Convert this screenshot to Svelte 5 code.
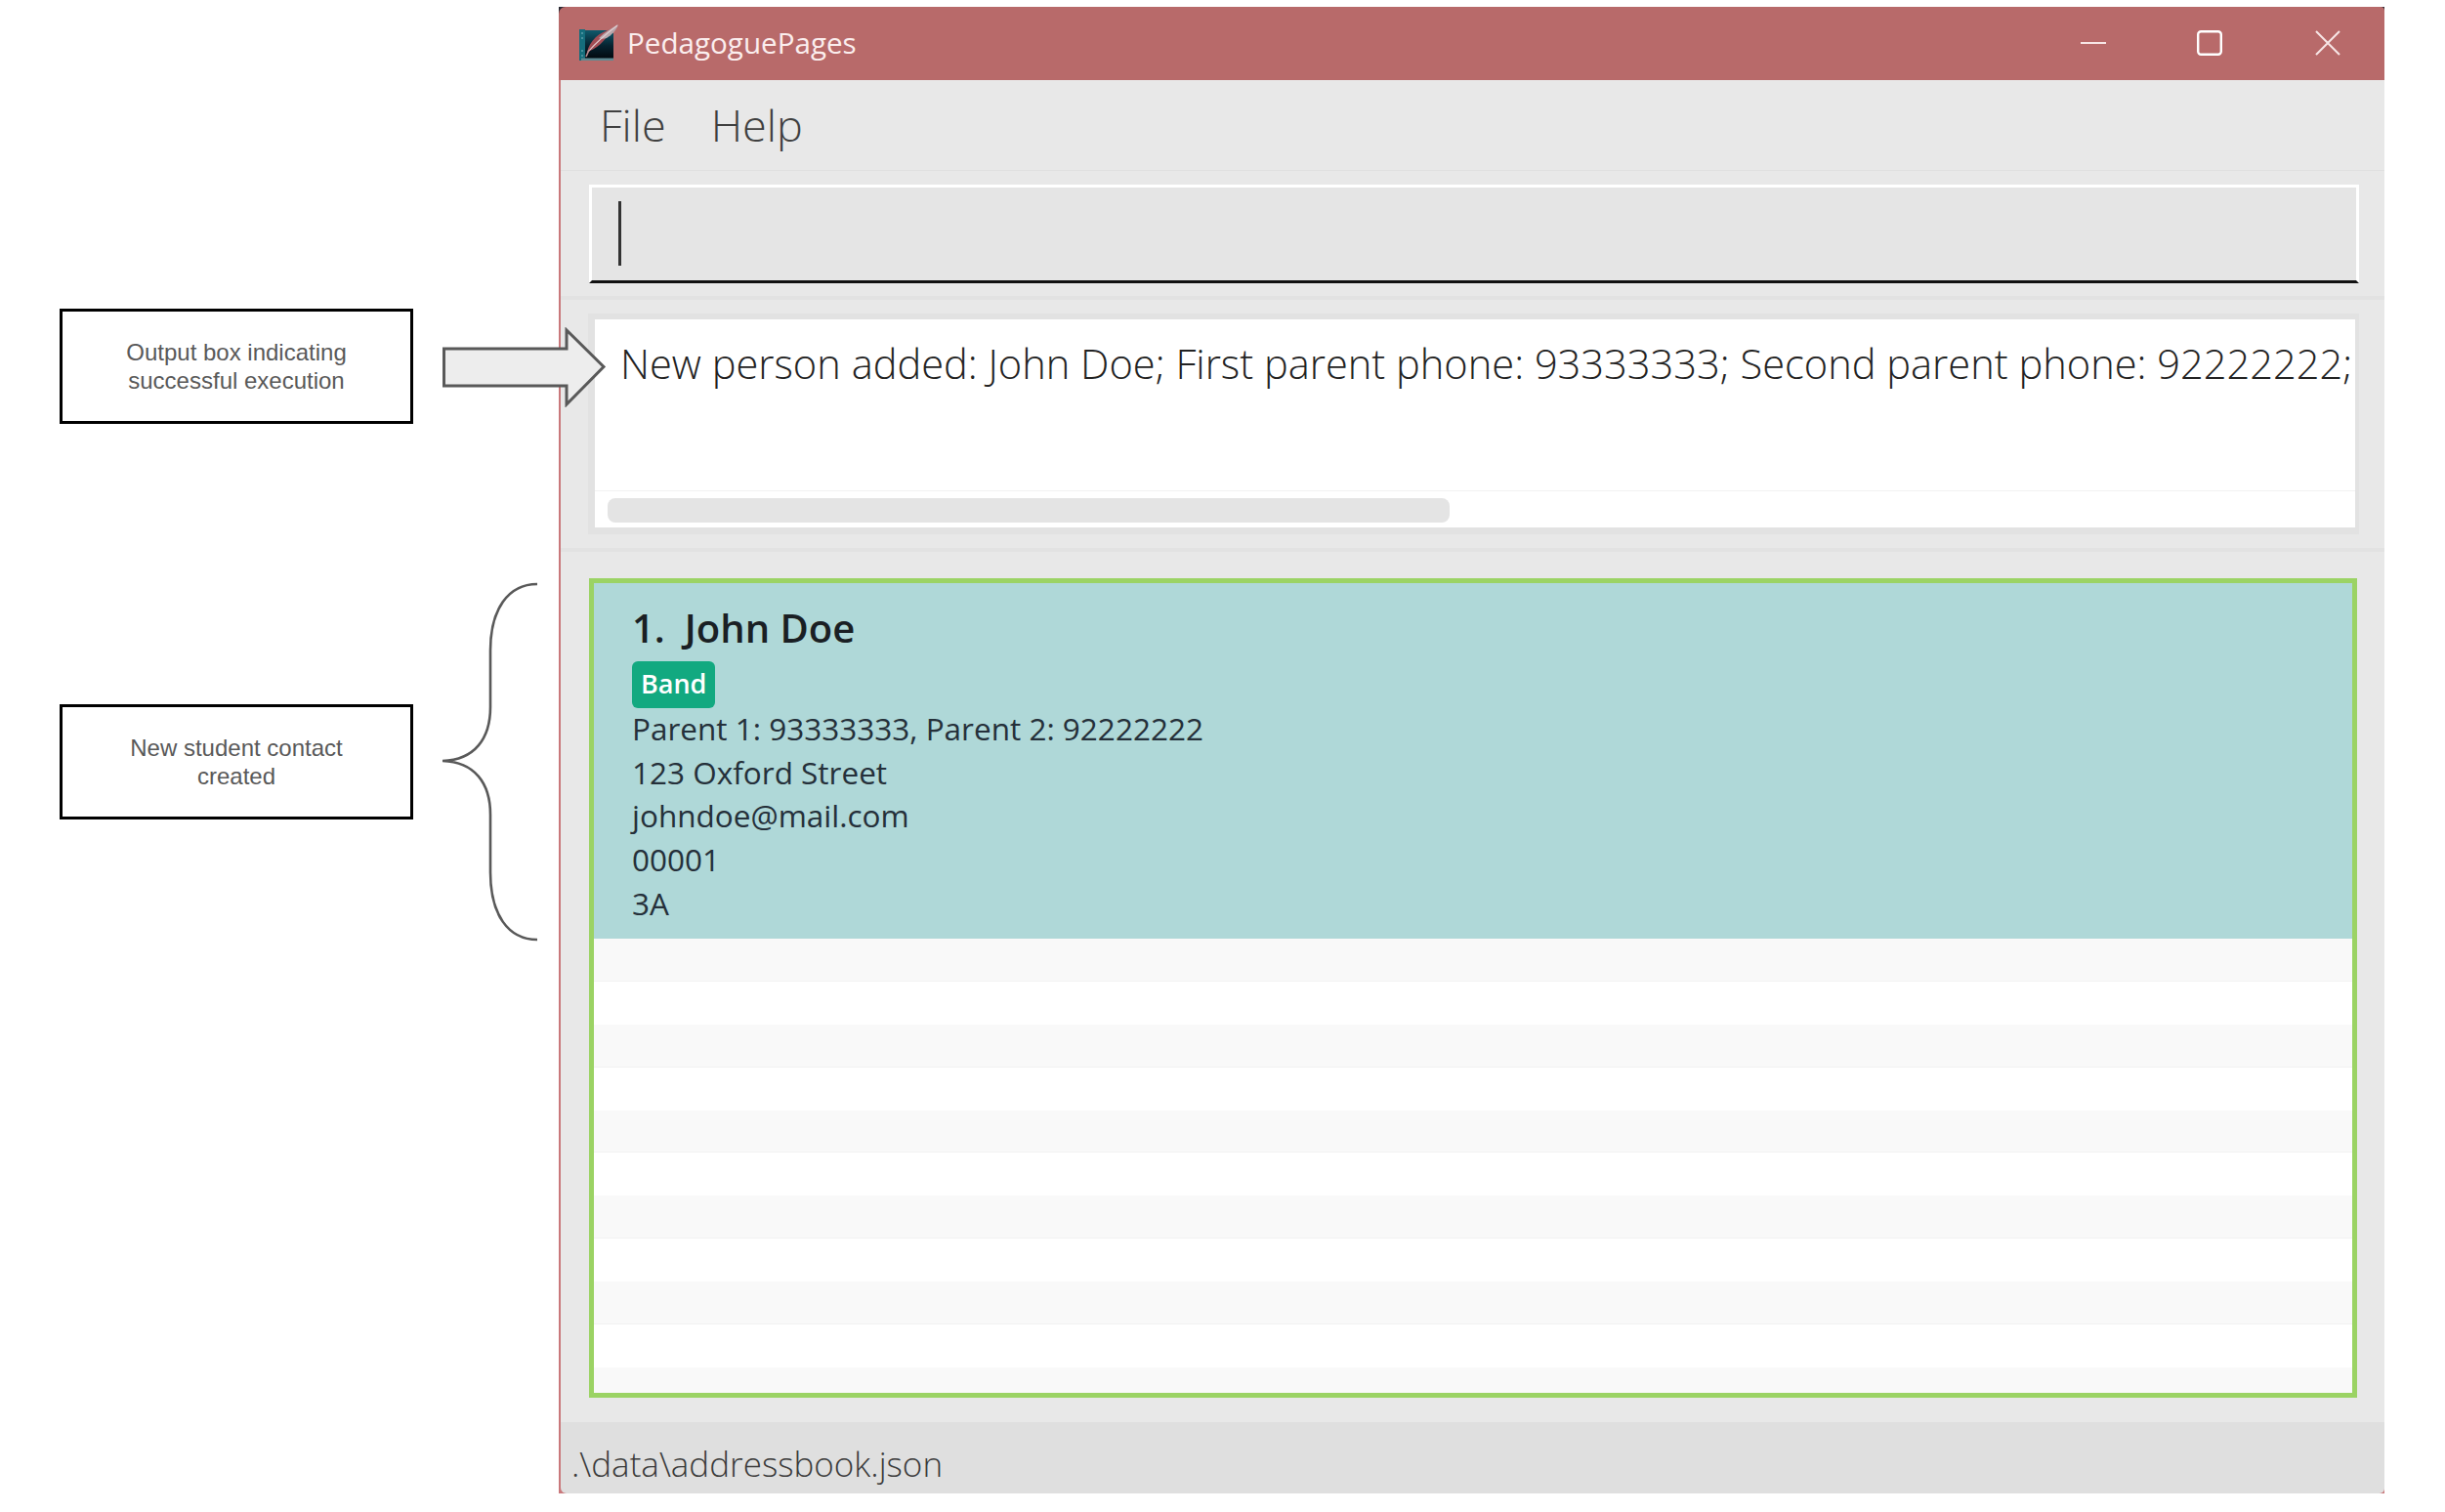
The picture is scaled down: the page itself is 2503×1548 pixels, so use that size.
<script>
  const rows = Array.from({ length: 11 }, (_, i) => i);
  const details = ['Parent 1: 93333333, Parent 2: 92222222', '123 Oxford Street', 'johndoe@mail.com', '00001', '3A'];
</script>

<div class="page">
  <aside class="note note-output"><p>Output box indicating<br />successful execution</p></aside>
  <aside class="note note-student"><p>New student contact<br />created</p></aside>

  <svg class="arrow" viewBox="0 0 170 82" aria-hidden="true">
    <path d="M1.5 22 H127 V3 L165 40.5 L127 79 V60 H1.5 Z" fill="#ededed" stroke="#595959" stroke-width="3" stroke-linejoin="miter" />
  </svg>
  <svg class="brace" viewBox="0 0 100 369" aria-hidden="true">
    <path d="M98 2 C68 2 50 28 50 70 V128 C50 160 34 182 1 183 C34 184 50 206 50 238 V297 C50 340 68 366 98 366" fill="none" stroke="#595959" stroke-width="2.6" />
  </svg>

  <div class="window">
    <header class="title">
      <svg class="logo" viewBox="0 0 40 38" aria-hidden="true">
        <defs>
          <linearGradient id="bookface" x1="0" y1="0" x2="0" y2="1">
            <stop offset="0" stop-color="#0f5a6c" />
            <stop offset="0.55" stop-color="#06222f" />
            <stop offset="1" stop-color="#02090f" />
          </linearGradient>
        </defs>
        <path d="M1 6 H35 V35 H1 Z" fill="url(#bookface)" />
        <path d="M0 5 H6 V37 H0 Z" fill="#156d7c" />
        <path d="M2 9 H4 M2 14 H4 M2 27 H4 M2 32 H4" stroke="#7fb6c0" stroke-width="1" />
        <path d="M2 34.5 H35 V37 H2 Z" fill="#5f8a92" />
        <path d="M8 29 C10 17 21 7 33 5 C29 13 21 23 11 27 Z" fill="#a24d55" />
        <path d="M20 14 C26 8 33 4 40 0 C38 6 33 11 28 14 C25 15 22 15 20 14 Z" fill="#b7a6ab" />
        <path d="M9 28 C17 19 27 10 39 1" fill="none" stroke="#e3cfd2" stroke-width="1.1" />
        <path d="M7 33 L10 26" stroke="#c08d92" stroke-width="1.6" />
      </svg>
      <span class="app-name">PedagoguePages</span>
      <div class="controls">
        <svg viewBox="0 0 26 26" aria-hidden="true"><path d="M0 13 H26" /></svg>
        <svg viewBox="0 0 26 26" aria-hidden="true"><rect x="1.2" y="1.2" width="23.6" height="23.6" rx="3" class="max" /></svg>
        <svg class="close" viewBox="0 0 26 26" aria-hidden="true"><path d="M1 1 L25 25 M25 1 L1 25" /></svg>
      </div>
    </header>

    <nav class="menu"><span>File</span><span>Help</span></nav>

    <section class="command"><div class="input"><i class="caret"></i></div></section>

    <section class="result">
      <div class="result-box">
        <div class="result-text">New person added: John Doe; First parent phone: 93333333; Second parent phone: 92222222;</div>
        <div class="scroll"><div class="thumb"></div></div>
      </div>
    </section>

    <section class="list-wrap">
      <div class="list">
        <article class="card">
          <h2><span>1.</span><span>John Doe</span></h2>
          <div class="tag">Band</div>
          {#each details as d}<div class="line">{d}</div>{/each}
        </article>
        {#each rows as r}<div class="row"></div>{/each}
      </div>
    </section>

    <footer class="status">.\data\addressbook.json</footer>
  </div>
</div>

<style>
  :global(body) { margin: 0; background: #fff; }
  .page { position: relative; width: 2503px; height: 1548px; overflow: hidden; background: #fff; padding-top: 7px; box-sizing: border-box; font-family: "Open Sans", "Noto Sans", sans-serif; }

  .note { position: absolute; left: 61px; width: 362px; height: 118px; box-sizing: border-box; border: 3px solid #000; display: flex; align-items: center; justify-content: center; }
  .note p { margin: 0; font: 24px/29px "Liberation Sans", Arial, sans-serif; color: #595959; text-align: center; }
  .note-output { top: 316px; }
  .note-student { top: 721px; }
  .arrow { position: absolute; left: 453px; top: 335px; width: 170px; height: 82px; z-index: 2; }
  .brace { position: absolute; left: 452px; top: 596px; width: 100px; height: 369px; }

  .window { margin-left: 572px; width: 1869px; height: 1522px; box-sizing: border-box; padding-left: 2px; display: flex; flex-direction: column; background: linear-gradient(#2a2a33 0 16px, #c9787b 16px); }

  .title { flex: 0 0 75px; box-sizing: border-box; margin-left: -2px; display: flex; align-items: center; background: #b86a6a; border-radius: 7px 4px 0 0; color: #fbeeee; padding: 0 0 2px 21px; }
  .logo { width: 40px; height: 38px; }
  .app-name { margin-left: 9px; font-size: 29.6px; font-weight: 400; }
  .controls { margin-left: auto; display: flex; align-items: center; gap: 93px; padding-right: 45px; }
  .controls svg { width: 26px; height: 26px; fill: none; stroke: #f7e6e6; stroke-width: 2; }
  .controls .close { margin-left: 2px; }
  .controls .max { stroke: #fff; stroke-width: 2.4; }

  .menu { flex: 0 0 93px; box-sizing: border-box; display: flex; align-items: center; gap: 46px; padding: 0 0 2px 40px; background: #e8e8e8; border-bottom: 1px solid #e0e0e0; font-size: 45px; font-weight: 300; color: #3f3f3f; }

  .command { flex: 0 0 128px; box-sizing: border-box; padding: 14px 26px 13px 29px; background: #e8e8e8; border-bottom: 4px solid #e2e2e2; }
  .input { height: 101px; box-sizing: border-box; border: 3px solid #fff; border-bottom: 3px solid #111; background: #e5e5e5; padding: 14px 0 0 27px; }
  .caret { display: block; width: 3px; height: 66px; background: #333; }

  .result { flex: 0 0 258px; box-sizing: border-box; padding: 14px 26px 14px 28px; background: #e8e8e8; border-bottom: 4px solid #e2e2e2; }
  .result-box { height: 226px; box-sizing: border-box; border: solid #e2e2e2; border-width: 6px 4px 7px 7px; background: #fff; display: flex; flex-direction: column; }
  .result-text { height: 175px; box-sizing: border-box; padding: 17px 0 0 26px; overflow: hidden; white-space: nowrap; font-size: 41.6px; line-height: 56px; font-weight: 300; color: #222; }
  .scroll { flex: 1; border-top: 1px solid #f2f2f2; padding: 7px 0 0 13px; }
  .thumb { width: 862px; height: 25px; border-radius: 8px; background: #e4e4e4; }

  .list-wrap { flex: 1; min-height: 0; box-sizing: border-box; padding: 27px 28px 25px 29px; background: #e8e8e8; }
  .list { height: 100%; box-sizing: border-box; border: 5px solid #9bd364; background: #f9f9f9; overflow: hidden; }
  .card { height: 364px; box-sizing: border-box; background: #afd8d8; padding: 20px 0 0 39px; color: #25303a; }
  .card h2 { margin: 0; display: flex; gap: 20px; font-size: 40px; line-height: 52px; font-weight: 600; color: #1a1f24; }
  .tag { display: inline-block; margin: 8px 0 -1px; height: 48px; padding: 0 9px; border-radius: 6px; background: #12a980; color: #fff; font-size: 27px; line-height: 46px; font-weight: 600; }
  .line { font-size: 31.5px; line-height: 44.7px; font-weight: 400; }
  .row { height: 43.9px; box-sizing: border-box; background: #f9f9f9; border-bottom: 1px solid #f2f2f2; }
  .row:nth-child(odd) { background: #fff; border-bottom: 0; }

  .status { flex: 0 0 73px; box-sizing: border-box; padding: 17px 0 0 11px; background: #dfdfdf; border-radius: 0 0 5px 6px; font-size: 35px; line-height: 52px; font-weight: 300; color: #3a3a3a; }
</style>
